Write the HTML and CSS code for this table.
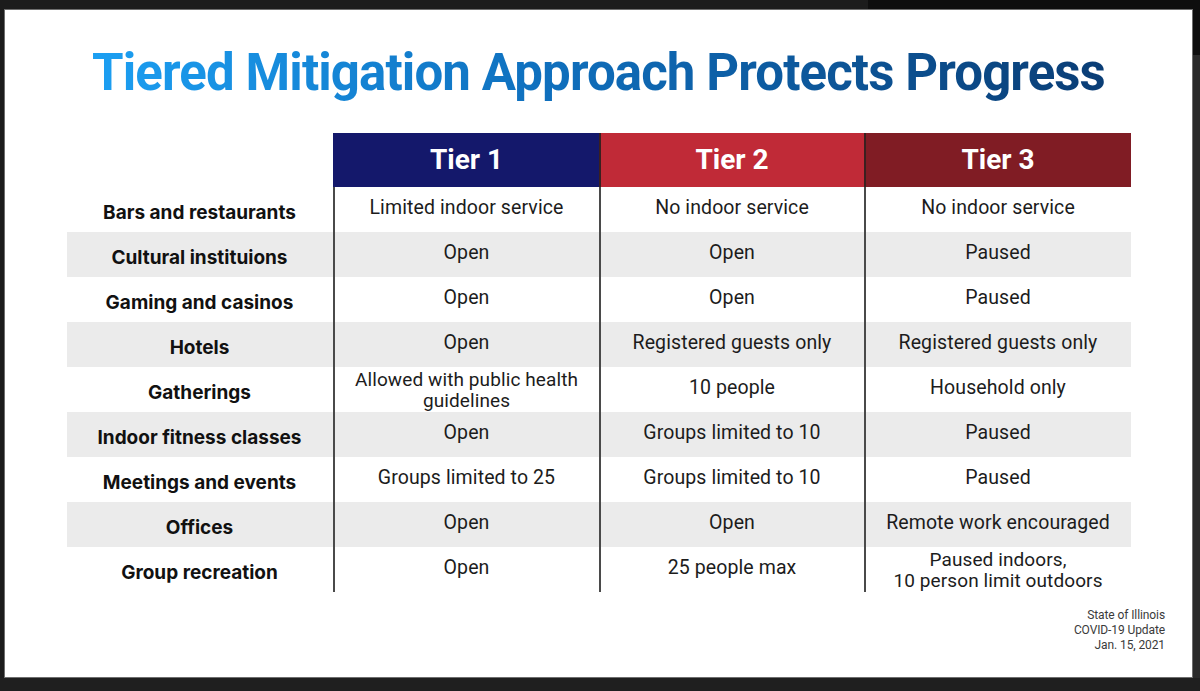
FILE: index.html
```html
<!DOCTYPE html>
<html lang="en">
<head>
<meta charset="utf-8">
<title>Tiered Mitigation Approach Protects Progress</title>
<link rel="stylesheet" href="styles.css">
</head>
<body>
<div class="screen">
  <div class="topbar"><span class="tb-left"></span><span class="tb-right"></span></div>
  <div class="stage">
    <div class="gutter-left"></div>
    <main class="slide">
      <h1 class="title">Tiered Mitigation Approach Protects Progress</h1>
      <div class="table">
        <div class="tr head">
          <div class="th-blank"></div>
          <div class="th tier1">Tier 1</div>
          <div class="th tier2">Tier 2</div>
          <div class="th tier3">Tier 3</div>
        </div>
        <div class="tr">
          <div class="label">Bars and restaurants</div>
          <div class="td">Limited indoor service</div>
          <div class="td">No indoor service</div>
          <div class="td">No indoor service</div>
        </div>
        <div class="tr alt">
          <div class="label">Cultural instituions</div>
          <div class="td">Open</div>
          <div class="td">Open</div>
          <div class="td">Paused</div>
        </div>
        <div class="tr">
          <div class="label">Gaming and casinos</div>
          <div class="td">Open</div>
          <div class="td">Open</div>
          <div class="td">Paused</div>
        </div>
        <div class="tr alt">
          <div class="label">Hotels</div>
          <div class="td">Open</div>
          <div class="td">Registered guests only</div>
          <div class="td">Registered guests only</div>
        </div>
        <div class="tr">
          <div class="label">Gatherings</div>
          <div class="td two">Allowed with public health<br>guidelines</div>
          <div class="td">10 people</div>
          <div class="td">Household only</div>
        </div>
        <div class="tr alt">
          <div class="label">Indoor fitness classes</div>
          <div class="td">Open</div>
          <div class="td">Groups limited to 10</div>
          <div class="td">Paused</div>
        </div>
        <div class="tr">
          <div class="label">Meetings and events</div>
          <div class="td">Groups limited to 25</div>
          <div class="td">Groups limited to 10</div>
          <div class="td">Paused</div>
        </div>
        <div class="tr alt">
          <div class="label">Offices</div>
          <div class="td">Open</div>
          <div class="td">Open</div>
          <div class="td">Remote work encouraged</div>
        </div>
        <div class="tr">
          <div class="label">Group recreation</div>
          <div class="td">Open</div>
          <div class="td">25 people max</div>
          <div class="td two">Paused indoors,<br>10 person limit outdoors</div>
        </div>
      </div>
      <div class="source">
        <div>State of Illinois</div>
        <div>COVID-19 Update</div>
        <div>Jan. 15, 2021</div>
      </div>
    </main>
    <div class="gutter-right"></div>
  </div>
</div>
</body>
</html>
```
FILE: styles.css
```css
* { box-sizing: border-box; }
html, body { margin: 0; padding: 0; }
body {
  background: #1f1f1f;
  width: 1200px;
  height: 691px;
  overflow: hidden;
  font-family: "Roboto", "Liberation Sans", sans-serif;
}
.screen { display: flex; flex-direction: column; }
.topbar { display: flex; height: 9px; }
.tb-left { flex: 0 0 868px; background: #1c1c1c; }
.tb-right { flex: 1; background: #0e0e0e; }
.stage { display: flex; }
.gutter-left { flex: 0 0 4px; background: #1c1c1c; }
.gutter-right { flex: 1; background: linear-gradient(#0e0e0e 0 46px, #2a2a2a 46px); }
.slide {
  flex: 0 0 1189px;
  height: 669px;
  background: #fff;
  border: 1px solid #6e6e6e;
  display: flex;
  flex-direction: column;
}
.title {
  margin: 33px 0 0;
  font-family: "Roboto", "Liberation Sans", sans-serif;
  font-weight: 700;
  font-size: 51px;
  line-height: 60px;
  letter-spacing: -0.9px;
  text-align: center;
  align-self: center;
  background: linear-gradient(90deg, #1c9ff2 0%, #0f6fbd 45%, #0a3d75 100%);
  -webkit-background-clip: text;
  background-clip: text;
  color: transparent;
}
.table {
  margin: 30px auto 0;
  width: 1064px;
  display: flex;
  flex-direction: column;
}
.tr {
  display: grid;
  grid-template-columns: 266px 266px 265px 267px;
  height: 45px;
}
.tr.alt { background: #ebebeb; }
.tr.head { height: 54px; background: #fff; }
.th {
  display: flex;
  align-items: center;
  justify-content: center;
  padding-bottom: 2px;
  color: #fff;
  font-weight: 700;
  font-size: 28px;
  border-left: 2px solid #3a2020;
}
.tier1 { background: #14186b; border-left-color: #14186b; }
.tier2 { background: #c02a37; }
.tier3 { background: #801c24; }
.label {
  display: flex;
  align-items: center;
  justify-content: center;
  padding-top: 5px;
  font-family: "Inter", "Liberation Sans", sans-serif;
  font-weight: 700;
  font-size: 19px;
  color: #111;
}
.td {
  display: flex;
  align-items: center;
  justify-content: center;
  text-align: center;
  padding-bottom: 3px;
  border-left: 2px solid #4a4a4a;
  font-size: 19.5px;
  letter-spacing: 0.1px;
  line-height: 20px;
  color: #1c1c1c;
}
.td.two { padding-bottom: 0; padding-top: 1px; font-size: 19px; line-height: 21px; }
.source {
  margin: 16px 27px 0 0;
  align-self: flex-end;
  text-align: right;
  font-size: 12px;
  line-height: 15px;
  letter-spacing: -0.1px;
  color: #3a3a3a;
}
```
